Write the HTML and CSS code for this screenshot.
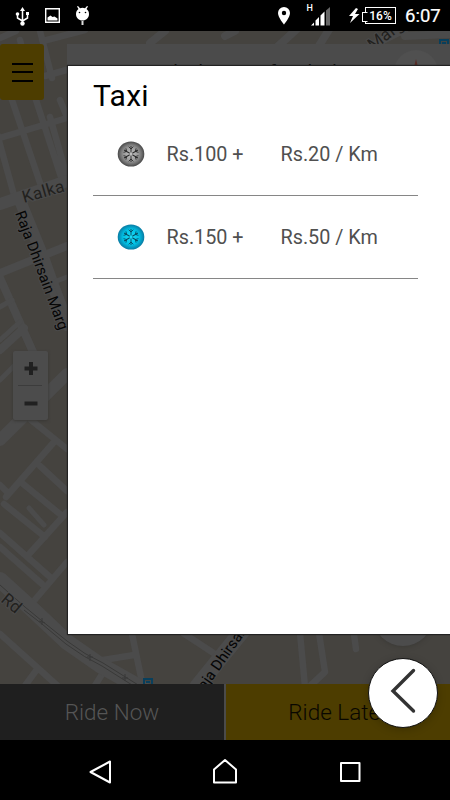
FILE: index.html
```html
<!DOCTYPE html>
<html lang="en">
<head>
<meta charset="utf-8">
<title>Taxi</title>
<link rel="stylesheet" href="styles.css">
</head>
<body>
<div class="phone">
  <header class="status">
    <svg class="status-left" width="100" height="31" viewBox="0 0 100 31">
      <g stroke="#fff" fill="none" stroke-width="1.5"><path d="M22.500 9v14M17.500 14v4l5 3M27.500 13v5l-5 3"/></g>
      <path d="M22.500 7l2.500 4h-5z" fill="#fff"/><circle cx="22.500" cy="23.500" r="2.200" fill="#fff"/><circle cx="17.500" cy="14" r="1.800" fill="#fff"/><path d="M26 12h3v3h-3z" fill="#fff"/>
      <path d="M45.700 8.700h13.600v13.600H45.700z" fill="none" stroke="#fff" stroke-width="1.400"/><path d="M47.500 20.500v-3l3-2 2 1.500 2-.5 3 2v2z" fill="#fff"/>
      <path d="M76 14c0-3 1.500-4 2.500-5L77 6.500l1-.5 2 2.200q2.500-.8 5 0L87 6l1 .5L86.500 9c1 1 2.500 2 2.500 5 0 4-3 6.500-6.500 6.500S76 18 76 14z" fill="#fff"/><path d="M81.500 21h2v4h-2z" fill="#ddd"/><circle cx="79.500" cy="12.500" r=".8"/><circle cx="85.500" cy="12.500" r=".8"/>
    </svg>
    <svg class="status-mid" width="87" height="31" viewBox="275 0 87 31">
      <path fill="#fff" fill-rule="evenodd" d="M284 7a6 6 0 0 0-6 6c0 4.500 6 11.500 6 11.500s6-7 6-11.500a6 6 0 0 0-6-6zm0 3.800a2.200 2.200 0 1 1 0 4.400 2.200 2.200 0 0 1 0-4.400z"/>
      <text class="network" x="306.500" y="10.500">H</text>
      <path fill="#fff" d="M311 25.500l3-3v3zM315.500 25.500v-5l3.500-3.500v8.500zM320.500 25.500v-10l4-4v14z"/><path fill="#666" d="M326 25.500V10.500L330 7v18.500z"/>
      <path fill="#fff" d="M356 8l-7 8h4l-3 7 9.500-9h-4.500l3-5z"/>
    </svg>
    <div class="battery">16%</div>
    <div class="time">6:07</div>
  </header>

  <main class="screen">
    <svg class="map" width="450" height="709" viewBox="0 31 450 709">
      <path fill="#45433f" d="M0 31h450v709H0z"/>
      <g class="roads">
        <path class="w7" d="M0 138L67 118M12 100L40 183M36 100L62 180M-4 130L14 195M0 38L16 31M40 31L52 78M43 41L85 30M12 100L0 70M36 100L20 40M45 76L70 69M50 117L67 177M67 117l-7-17"/>
        <path class="w14" d="M0 204L67 181M21 203L43 257L67 325"/>
        <path class="w9" d="M0 273L67 246M0 278L33 352M0 350L24 328"/>
        <path class="w6" d="M0 307l12-7M0 340l20-18M54 282L67 277M56 284L67 312M0 380L14 366"/>
        <path class="w14" d="M0 440L67 374"/>
        <path class="w7" d="M31 420L67 449M54 442L6 497M40 466L67 491M22 483L61 515M0 485L8 493M4 504L45 537M0 533L50 577M0 547L42 584M67 512L30 553M67 562L33 602M0 634L60 688M24 687L38 668M94 687L106 668M132 634L143 687M103 660L134 655M183 633L218 656M300 633L305 687M319 633L325 672L310 686M353 627L356 649"/>
        <path class="w6" d="M29 508L44 525"/>
        <path class="w16" d="M0 580L33 610L67 642L100 665L148 692M197 687L243 630"/>
        <path class="w9" d="M150 43L165 31M225 36L235 31M275 49L298 28M317 49L330 28M365 49L405 29M405 36L450 34"/>
      </g>
      <path class="rail" d="M0 585L25 607L42 621L67 641Q85 655 103 663L143 688M24 610L42 624L66 644Q85 658 102 666L140 690M39 621l6 2M42 618v7M87 657l6 0M90 654v7M122 678l6 0M125 674v7"/>
      <g class="station"><path d="M144 679h8v8h-8zM440 40h8v8h-8z"/><path d="M146 682h4M442 43h4"/></g>
      <g class="labels">
        <text class="street" transform="translate(24 203) rotate(-16)">Kalka</text>
        <text class="marg" transform="translate(15 213) rotate(69.500)">Raja Dhirsain Marg</text>
        <text class="street" transform="translate(0 601) rotate(40)">Rd</text>
        <text class="marg" transform="translate(205 691) rotate(-55)">aja Dhirsain</text>
        <text class="street" transform="translate(373 51) rotate(-37)">Marg</text>
      </g>
    </svg>

    <div class="address"><span>B-124, D-Block, East of Kailash, New</span></div>
    <div class="compass"><i></i></div>
    <button class="menu" aria-label="Menu"><i></i><i></i><i></i></button>
    <div class="zoom">
      <svg width="35" height="69" viewBox="0 0 35 69"><path d="M11.500 17.500h13M18 11v13M11.500 52.500h13" stroke="#202020" stroke-width="4"/><path d="M5 34.500h24" stroke="#3c3c3c"/></svg>
    </div>
    <div class="locate"></div>

    <section class="panel">
      <h1>Taxi</h1>
      <ul class="fares">
        <li>
          <svg class="flake gray" width="28" height="28" viewBox="-14 -14 28 28">
            <defs>
              <radialGradient id="gray"><stop offset="0" stop-color="#c4c4c4"/><stop offset=".55" stop-color="#999"/><stop offset=".8" stop-color="#707070"/><stop offset="1" stop-color="#484848"/></radialGradient>
              <radialGradient id="blue"><stop offset="0" stop-color="#20dcf8"/><stop offset=".6" stop-color="#00c2e6"/><stop offset="1" stop-color="#087ba3"/></radialGradient>
              <g id="arm"><path d="M0-1.500V-8M-2.300-7.300L0-5l2.300-2.300"/></g>
              <g id="snow"><use href="#arm"/><use href="#arm" transform="rotate(60)"/><use href="#arm" transform="rotate(120)"/><use href="#arm" transform="rotate(180)"/><use href="#arm" transform="rotate(240)"/><use href="#arm" transform="rotate(300)"/></g>
            </defs>
            <ellipse rx="13.300" ry="12.600" fill="url(#gray)" stroke="none"/><use href="#snow"/>
          </svg>
          <span class="base">Rs.100 +</span><span>Rs.20 / Km</span>
        </li>
        <li>
          <svg class="flake blue" width="28" height="28" viewBox="-14 -14 28 28"><ellipse rx="13.300" ry="12.600" fill="url(#blue)" stroke="none"/><use href="#snow"/></svg>
          <span class="base">Rs.150 +</span><span>Rs.50 / Km</span>
        </li>
      </ul>
    </section>

    <div class="actions">
      <button class="now">Ride Now</button>
      <button class="later">Ride Later</button>
    </div>
    <button class="back" aria-label="Close">
      <svg width="70" height="70" viewBox="368 658 70 70"><path d="M413.500 670.500L393 691l20.500 20" fill="none" stroke="#333" stroke-width="3.400" stroke-linecap="round"/></svg>
    </button>
  </main>

  <nav class="navbar">
    <svg width="450" height="60" viewBox="0 740 450 60" fill="none" stroke="#fff" stroke-width="2" stroke-linejoin="round">
      <path d="M110 761.500v21L90.500 772z"/><path d="M214 782.500v-13l11-9.500 11 9.500v13z"/><path d="M341 763h18.500v18H341z"/>
    </svg>
  </nav>
</div>
</body>
</html>
```
FILE: styles.css
```css
* { box-sizing: border-box; }
body { margin: 0; font-family: Roboto, sans-serif; background: #000; }
button { border: 0; padding: 0; margin: 0; font-family: inherit; }
.phone { width: 450px; height: 800px; display: flex; flex-direction: column; overflow: hidden; }
.status { height: 31px; display: flex; background: #000; color: #fff; flex: none; }
.status-mid { margin-left: 175px; }
.network { font: 500 9px Roboto, sans-serif; fill: #fff; }
.battery {
  position: relative; width: 31px; height: 17px; margin: 7px 0 0 3px;
  border: 1px solid #fff; font-size: 12px; font-weight: 500; line-height: 16px; text-align: center;
}
.battery::before {
  content: ""; position: absolute; left: -4px; top: 4px; width: 4px; height: 8px;
  border: 1px solid #fff; border-right-color: #000; background: #000;
}
.time { margin-left: 9px; font-size: 18.500px; font-weight: 400; line-height: 33px; -webkit-text-stroke: .2px #fff; }

.screen { position: relative; height: 709px; flex: none; display: flex; flex-direction: column; justify-content: flex-end; }
.map { position: absolute; left: 0; top: 0; }
.roads path { fill: none; stroke: #4b4b4b; stroke-linejoin: round; stroke-linecap: round; }
.roads .w6 { stroke-width: 5px; }
.roads .w7 { stroke-width: 6.500px; }
.roads .w9 { stroke-width: 8px; }
.roads .w14 { stroke-width: 12px; }
.roads .w16 { stroke-width: 16px; }
.rail { fill: none; stroke: #393938; stroke-width: 1px; }
.station path { fill: none; stroke: #083f5c; stroke-width: 2px; }
.labels text { fill: #171717; stroke: #4b4b4b; stroke-width: 2px; paint-order: stroke; font-family: Roboto, sans-serif; }
.labels .street { font-size: 17px; fill: #22211e; letter-spacing: .3px; }
.labels .marg { font-size: 15px; fill: #050505; }

.address {
  position: absolute; left: 67px; top: 13px; width: 383px; height: 50px; padding: 16px 0 0 19px;
  background: #4b4b4b; color: #0c0c0c; font-size: 19px; line-height: 23px; white-space: nowrap; overflow: hidden;
}
.compass { position: absolute; left: 394px; top: 19px; width: 44px; height: 44px; border-radius: 50%; background: #505050; }
.compass i { position: absolute; left: 18px; top: 9px; border: 4px solid transparent; border-top: 0; border-bottom: 16px solid #572c26; }
.menu {
  position: absolute; left: 0; top: 13px; width: 44px; height: 56px; border-radius: 3px; background: #4d3d00;
  display: flex; flex-direction: column; justify-content: center; align-items: center; gap: 6.500px;
}
.menu i { width: 21px; height: 2px; background: #000; }
.zoom { position: absolute; left: 12.500px; top: 320px; width: 35px; height: 69px; border-radius: 2px; background: #4c4c4c; box-shadow: 0 1px 3px #383734; }
.locate { position: absolute; left: 373px; top: 555px; width: 60px; height: 60px; border-radius: 50%; background: #4c4c4c; box-shadow: 0 1px 4px #3b3a36; }

.panel { position: absolute; left: 67.500px; top: 35px; width: 382.500px; height: 568px; padding: 12px 32.500px 0 25.500px; background: #fff; box-shadow: 0 0 1px 1px #222; }
.panel h1 { margin: 0; font-size: 30px; font-weight: 400; line-height: 35.500px; letter-spacing: .3px; color: #000; }
.fares { margin: 0; padding: 0; list-style: none; }
.fares li { height: 82.500px; display: flex; align-items: center; padding-left: 23.500px; border-bottom: 1px solid #868686; font-size: 19.800px; color: #505050; }
.fares span { padding-top: 1px; }
.flake { flex: none; margin-right: 22px; fill: none; stroke: #292929; stroke-width: .9px; }
.flake.blue { stroke: #064a60; }
.base { width: 114px; }

.actions { position: relative; display: flex; gap: 2px; height: 56px; background: #4b4b4b; z-index: 0; }
.actions button { height: 56px; font-size: 22.500px; font-weight: 300; }
.now { width: 224px; background: #1f1f1f; color: #555; }
.later { width: 224px; background: #4d3d00; color: #090700; }
.back { position: absolute; left: 368px; top: 627px; width: 70px; height: 70px; border: 1px solid #111; border-radius: 50%; background: #fff; z-index: 1; box-shadow: 0 2px 8px rgba(0, 0, 0, .2); }
.back svg { display: block; margin: -1px; }
.navbar { height: 60px; flex: none; background: #000; }
.navbar svg { display: block; }
```
